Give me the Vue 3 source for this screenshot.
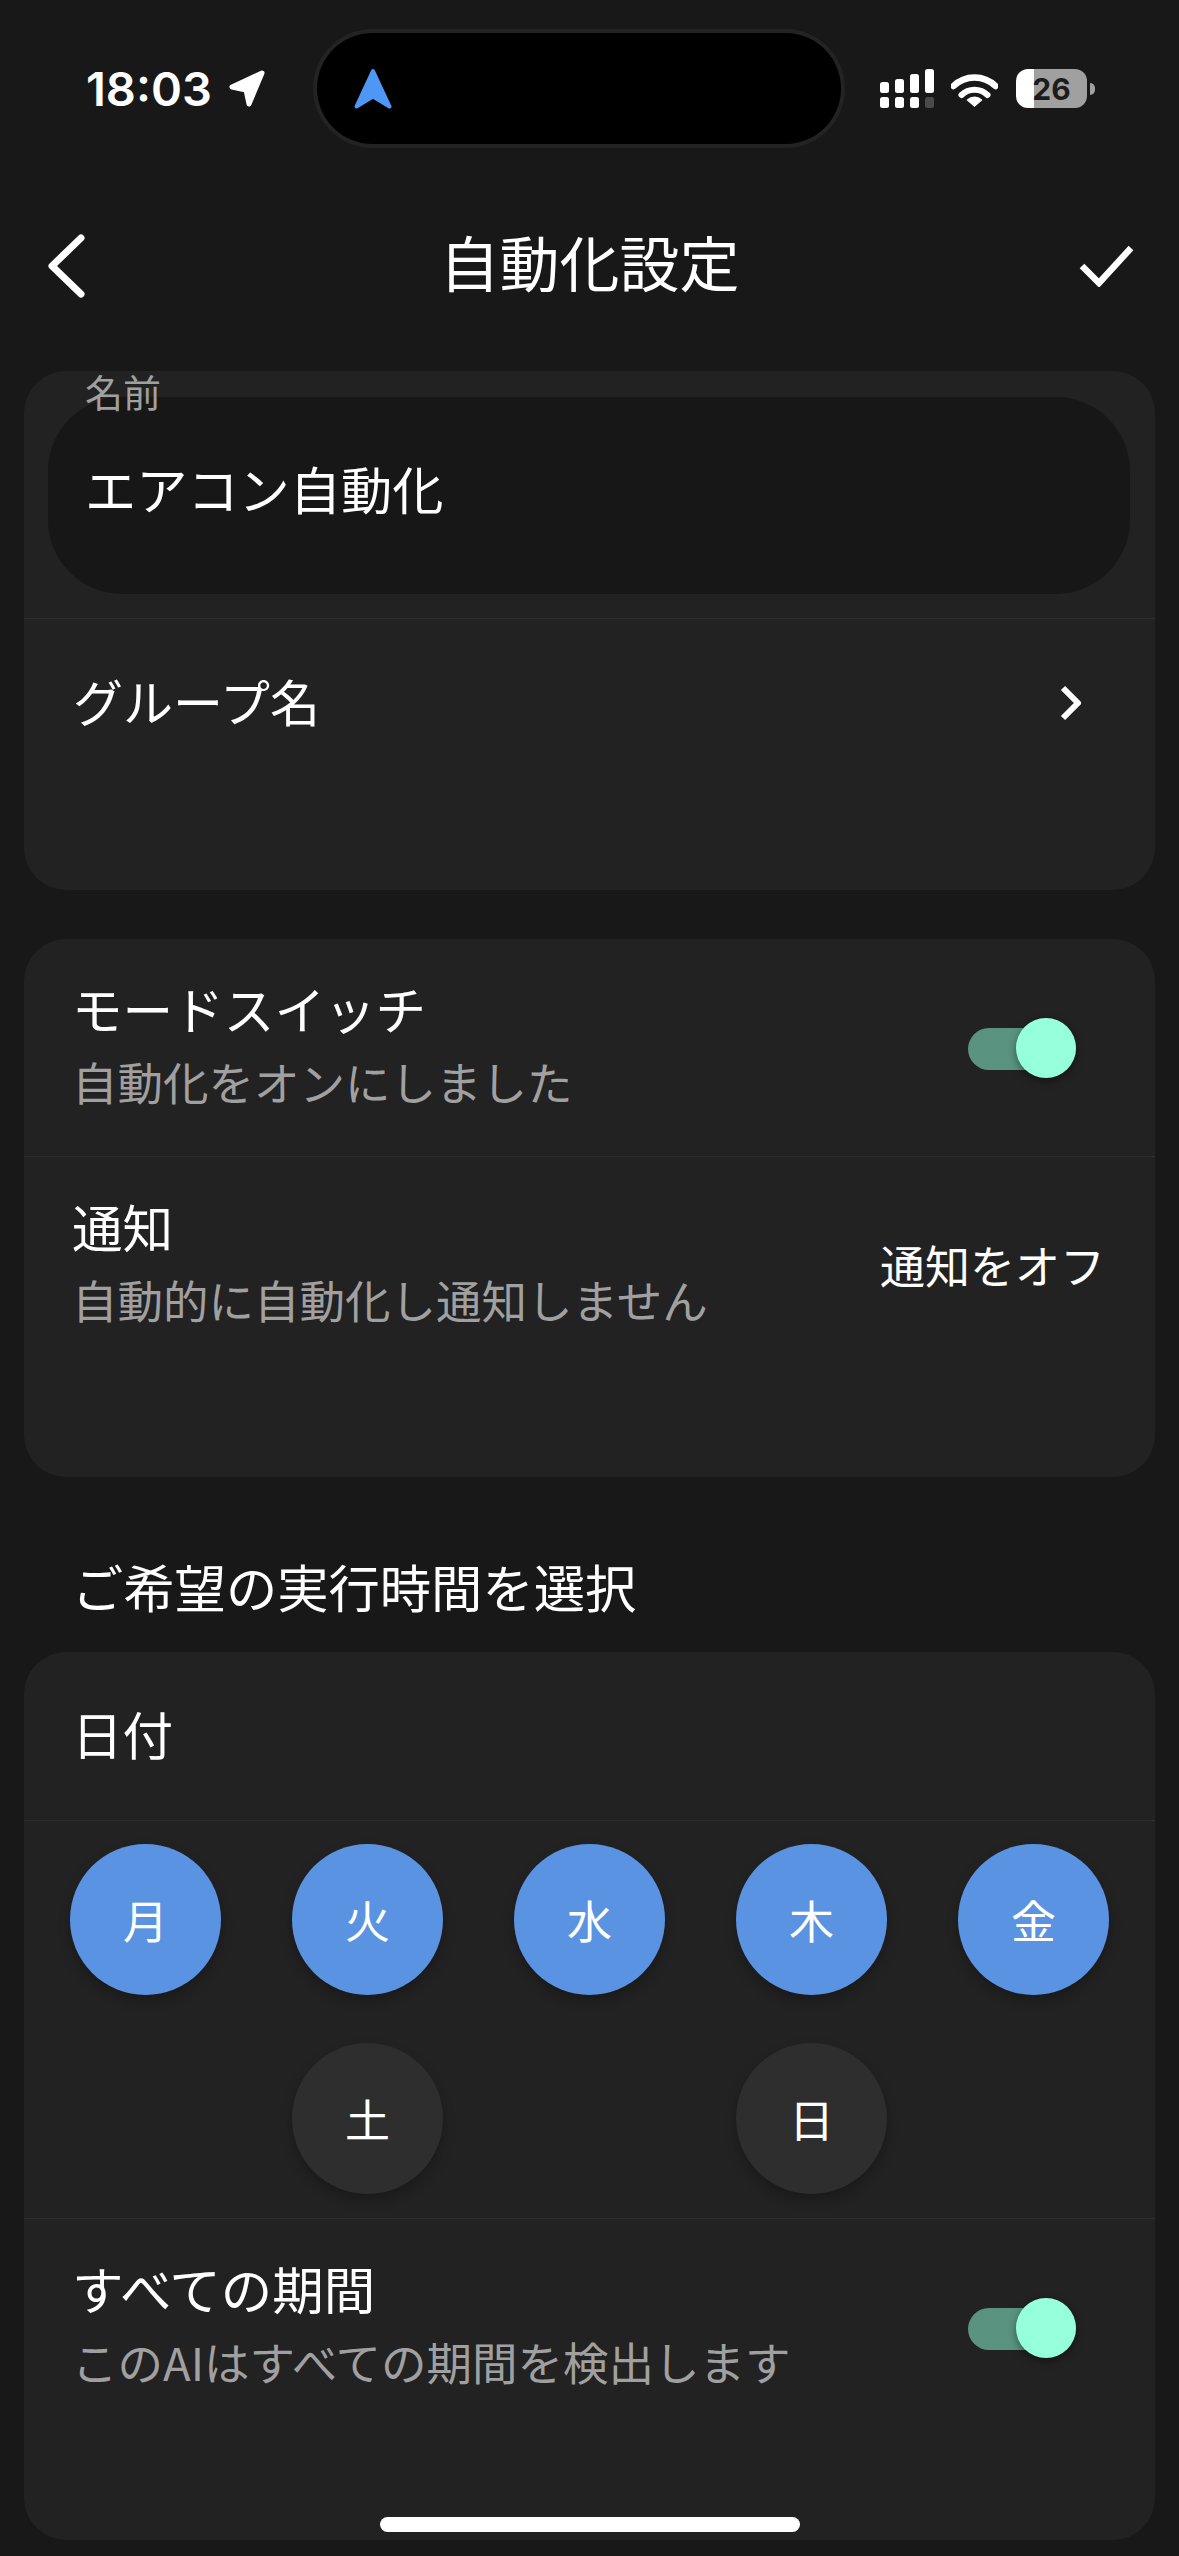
<template>
  <div class="page">
    <div class="status-bar">
      <div class="status-left">
        <span class="time">18:03</span>
        <svg class="loc" width="36" height="37" viewBox="0 0 36 37">
          <path d="M33 3 L3 17 L17 20 L20 34 Z" fill="#fff" stroke="#fff" stroke-width="5" stroke-linejoin="round" />
        </svg>
      </div>
      <div class="island">
        <svg width="38" height="41" viewBox="0 0 38 41">
          <path d="M19 3 L35.5 38.5 L19 28.5 L2.5 38.5 Z" fill="#4f97f5" stroke="#4f97f5" stroke-width="4" stroke-linejoin="round" />
        </svg>
      </div>
      <div class="status-right">
        <svg width="55" height="39" viewBox="0 0 55 39">
          <rect x="0" y="13" width="9" height="11" rx="2.5" fill="#fff" />
          <rect x="15" y="10" width="9" height="14" rx="2.5" fill="#fff" />
          <rect x="30" y="5" width="9" height="19" rx="2.5" fill="#fff" />
          <rect x="45" y="0" width="9" height="24" rx="2.5" fill="#fff" />
          <rect x="0" y="28" width="9" height="11" rx="2.5" fill="#fff" />
          <rect x="15" y="28" width="9" height="11" rx="2.5" fill="#fff" />
          <rect x="30" y="28" width="9" height="11" rx="2.5" fill="#fff" />
          <rect x="45" y="28" width="9" height="11" rx="2.5" fill="#4a4a4a" />
        </svg>
        <svg class="wifi" width="47" height="36" viewBox="0 0 47 36">
          <path d="M2.5 15 A30 30 0 0 1 44.5 15" fill="none" stroke="#fff" stroke-width="6.5" stroke-linecap="round" />
          <path d="M10.5 24 A18.5 18.5 0 0 1 36.5 24" fill="none" stroke="#fff" stroke-width="6" stroke-linecap="round" />
          <path d="M23.5 35 L16.5 29 A10.5 10.5 0 0 1 30.5 29 Z" fill="#fff" stroke="#fff" stroke-width="1.5" stroke-linejoin="round" />
        </svg>
        <div class="battery"><span>26</span></div>
        <div class="battery-cap"></div>
      </div>
    </div>

    <header class="nav">
      <svg width="40" height="64" viewBox="0 0 40 64">
        <path d="M35 4 L6 32 L35 60" fill="none" stroke="#fff" stroke-width="7" stroke-linecap="round" stroke-linejoin="round" />
      </svg>
      <h1 class="title">自動化設定</h1>
      <svg width="55" height="43" viewBox="0 0 55 43">
        <path d="M3 22 L20 39 L52 4" fill="none" stroke="#fff" stroke-width="6.5" />
      </svg>
    </header>

    <section class="card name-card">
      <div class="name-field">
        <span class="float-label">名前</span>
        <span class="name-value">エアコン自動化</span>
      </div>
      <div class="group-row">
        <span class="label group-label">グループ名</span>
        <svg class="chevron" width="26" height="36" viewBox="0 0 26 36">
          <path d="M5 3 L20 18 L5 33" fill="none" stroke="#fff" stroke-width="6" stroke-linejoin="round" />
        </svg>
      </div>
    </section>

    <section class="card mode-card">
      <div class="row">
        <div class="row-text">
          <div class="label">モードスイッチ</div>
          <div class="sub">自動化をオンにしました</div>
        </div>
        <div class="switch"><span class="knob"></span></div>
      </div>
      <div class="row">
        <div class="row-text">
          <div class="label">通知</div>
          <div class="sub">自動的に自動化し通知しません</div>
        </div>
        <span class="row-value">通知をオフ</span>
      </div>
    </section>

    <h2 class="section-title">ご希望の実行時間を選択</h2>

    <section class="card time-card">
      <div class="date-row"><span class="label">日付</span></div>
      <div class="days">
        <div v-for="d in days" :key="d.name" class="day" :class="{ on: d.on }">{{ d.name }}</div>
      </div>
      <div class="row">
        <div class="row-text">
          <div class="label period-label">すべての期間</div>
          <div class="sub">このAIはすべての期間を検出します</div>
        </div>
        <div class="switch"><span class="knob"></span></div>
      </div>
    </section>

    <div class="home-bar"></div>
  </div>
</template>

<script setup>
const days = [
  { name: '月', on: true },
  { name: '火', on: true },
  { name: '水', on: true },
  { name: '木', on: true },
  { name: '金', on: true },
  { name: '土', on: false },
  { name: '日', on: false }
]
</script>

<style scoped>
.page {
  position: relative;
  width: 1179px;
  height: 2556px;
  overflow: hidden;
  background: #181818;
  color: #fff;
  font-family: "Noto Sans CJK JP", "Noto Sans", sans-serif;
}

/* status bar */
.status-bar {
  display: flex;
  align-items: center;
  height: 111px;
  padding-top: 33px;
}

.status-left {
  display: flex;
  align-items: center;
  gap: 17px;
  width: 317px;
  padding-left: 86px;
  box-sizing: border-box;
}

.time {
  font-family: Inter, sans-serif;
  font-size: 47px;
  font-weight: 600;
  line-height: 1;
}

.island {
  display: flex;
  align-items: center;
  width: 524px;
  height: 111px;
  padding-left: 37px;
  box-sizing: border-box;
  border-radius: 56px;
  background: #000;
  box-shadow: 0 0 0 4px #232323;
}

.status-right {
  display: flex;
  align-items: center;
  padding-left: 39px;
}

.wifi {
  margin-left: 16px;
}

.battery {
  display: flex;
  align-items: center;
  justify-content: center;
  width: 71px;
  height: 39px;
  margin-left: 18px;
  border-radius: 12px;
  background: linear-gradient(90deg, #fff 18px, #a0a0a0 18px);
  color: #1c1c1c;
  font-family: Inter, sans-serif;
  font-size: 30px;
  font-weight: 700;
}

.battery-cap {
  width: 5px;
  height: 12px;
  margin-left: 3px;
  border-radius: 0 6px 6px 0;
  background: #a0a0a0;
}

/* nav */
.nav {
  display: flex;
  align-items: center;
  justify-content: space-between;
  height: 227px;
  padding: 16px 45px 0 46px;
  box-sizing: border-box;
}

.title {
  margin: 0 0 0 14px;
  padding-bottom: 10px;
  font-size: 60px;
  font-weight: 400;
  line-height: 70px;
}

/* cards */
.card {
  margin: 0 24px;
  border-radius: 42px;
  background: #222;
  box-sizing: border-box;
}

.name-card {
  height: 519px;
  padding-top: 26px;
}

.mode-card {
  height: 538px;
  margin-top: 49px;
}

.time-card {
  height: 888px;
}

.name-field {
  position: relative;
  display: flex;
  align-items: center;
  height: 197px;
  margin: 0 25px 0 24px;
  padding: 0 0 16px 37px;
  box-sizing: border-box;
  border-radius: 74px;
  background: #171717;
}

.float-label {
  position: absolute;
  top: -29px;
  left: 37px;
  color: #a0a0a0;
  font-size: 38px;
  line-height: 46px;
}

.name-value {
  font-size: 51.2px;
  line-height: 60px;
}

.group-row {
  display: flex;
  align-items: center;
  justify-content: space-between;
  margin-top: 24px;
  padding: 51px 71px 0 49px;
  border-top: 1px solid #2e2e2e;
}

.chevron {
  margin-top: 6px;
}

.label {
  font-size: 50.6px;
  line-height: 60px;
}

.group-label {
  font-size: 50px;
}

.period-label {
  font-size: 51.5px;
}

.sub {
  margin-top: 13px;
  color: #a0a0a0;
  font-size: 45.5px;
  line-height: 60px;
}

.row {
  display: flex;
  align-items: center;
  justify-content: space-between;
  padding: 39px 79px 45px 48px;
}

.row + .row,
.days + .row {
  border-top: 1px solid #2e2e2e;
}

.row-value {
  margin: 5px -29px 0 0;
  font-size: 45px;
  line-height: 60px;
}

.section-title {
  margin: 0;
  padding: 79px 0 36px 72px;
  font-size: 51.3px;
  font-weight: 400;
  line-height: 60px;
}

.date-row {
  display: flex;
  align-items: center;
  height: 168px;
  padding: 0 0 6px 48px;
  box-sizing: border-box;
}

.days {
  display: grid;
  grid-template-columns: repeat(5, 151px);
  justify-content: space-between;
  row-gap: 48px;
  padding: 23px 46px 24px;
  border-top: 1px solid #2e2e2e;
}

.day {
  display: flex;
  align-items: center;
  justify-content: center;
  width: 151px;
  height: 151px;
  border-radius: 50%;
  background: #2e2e2e;
  box-shadow: 0 6px 12px rgba(0, 0, 0, 0.25);
  font-size: 45px;
}

.day.on {
  background: #5a93e2;
}

.day:nth-child(6) {
  grid-column: 2;
}

.day:nth-child(7) {
  grid-column: 4;
}

/* toggle */
.switch {
  position: relative;
  flex-shrink: 0;
  width: 108px;
  height: 42px;
  margin-top: 8px;
  border-radius: 21px;
  background: #5a9480;
}

.knob {
  position: absolute;
  top: -10px;
  right: 0;
  width: 60px;
  height: 60px;
  border-radius: 50%;
  background: #96ffdc;
  box-shadow: 0 3px 8px rgba(0, 0, 0, 0.4);
}

.home-bar {
  position: absolute;
  left: 380px;
  bottom: 24px;
  width: 420px;
  height: 15px;
  border-radius: 8px;
  background: #fff;
}
</style>

<style>
body {
  background: #181818;
}
</style>
